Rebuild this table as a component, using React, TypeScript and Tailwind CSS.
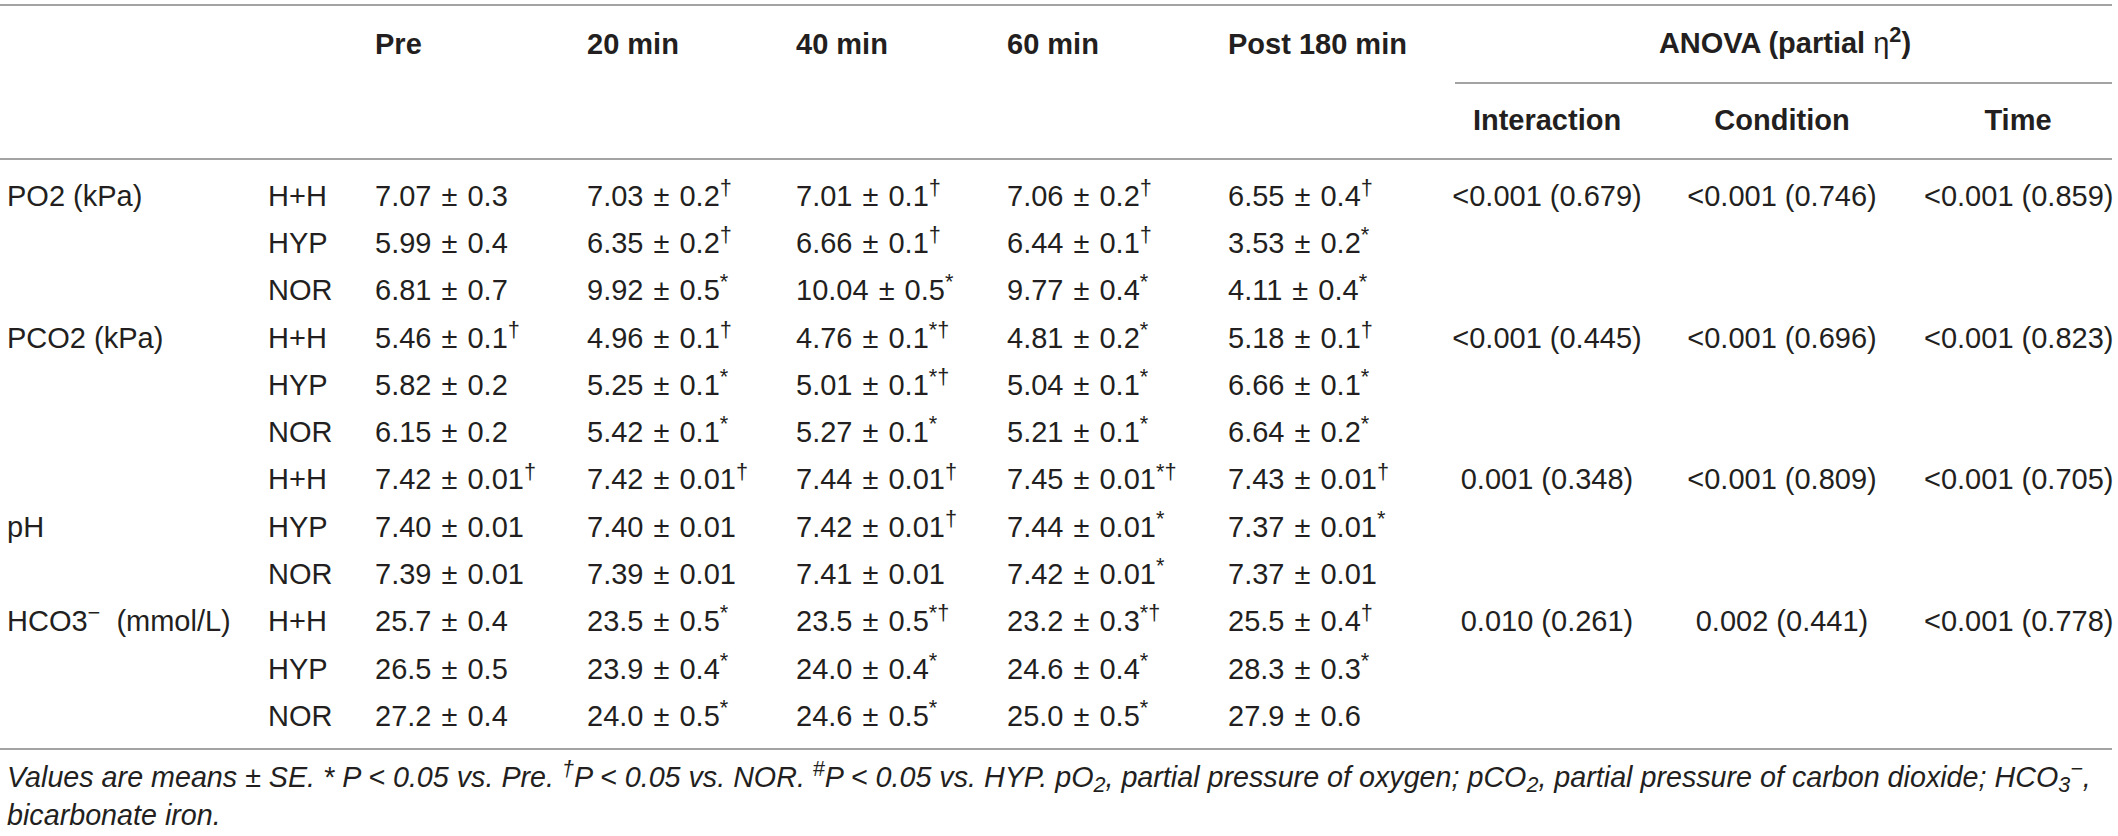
import React from 'react';

type Cell = [string, string];

interface Row {
  label?: React.ReactNode;
  group: string;
  values: Cell[];
  anova?: [string, string, string];
}

const GRID =
  'grid grid-cols-[268px_107px_212px_209px_211px_221px_212px_214px_270px_188px]';

const rows: Row[] = [
  {
    label: 'PO2 (kPa)',
    group: 'H+H',
    values: [['7.07 ± 0.3', ''], ['7.03 ± 0.2', '†'], ['7.01 ± 0.1', '†'], ['7.06 ± 0.2', '†'], ['6.55 ± 0.4', '†']],
    anova: ['<0.001 (0.679)', '<0.001 (0.746)', '<0.001 (0.859)']
  },
  {
    group: 'HYP',
    values: [['5.99 ± 0.4', ''], ['6.35 ± 0.2', '†'], ['6.66 ± 0.1', '†'], ['6.44 ± 0.1', '†'], ['3.53 ± 0.2', '*']]
  },
  {
    group: 'NOR',
    values: [['6.81 ± 0.7', ''], ['9.92 ± 0.5', '*'], ['10.04 ± 0.5', '*'], ['9.77 ± 0.4', '*'], ['4.11 ± 0.4', '*']]
  },
  {
    label: 'PCO2 (kPa)',
    group: 'H+H',
    values: [['5.46 ± 0.1', '†'], ['4.96 ± 0.1', '†'], ['4.76 ± 0.1', '*†'], ['4.81 ± 0.2', '*'], ['5.18 ± 0.1', '†']],
    anova: ['<0.001 (0.445)', '<0.001 (0.696)', '<0.001 (0.823)']
  },
  {
    group: 'HYP',
    values: [['5.82 ± 0.2', ''], ['5.25 ± 0.1', '*'], ['5.01 ± 0.1', '*†'], ['5.04 ± 0.1', '*'], ['6.66 ± 0.1', '*']]
  },
  {
    group: 'NOR',
    values: [['6.15 ± 0.2', ''], ['5.42 ± 0.1', '*'], ['5.27 ± 0.1', '*'], ['5.21 ± 0.1', '*'], ['6.64 ± 0.2', '*']]
  },
  {
    group: 'H+H',
    values: [['7.42 ± 0.01', '†'], ['7.42 ± 0.01', '†'], ['7.44 ± 0.01', '†'], ['7.45 ± 0.01', '*†'], ['7.43 ± 0.01', '†']],
    anova: ['0.001 (0.348)', '<0.001 (0.809)', '<0.001 (0.705)']
  },
  {
    label: 'pH',
    group: 'HYP',
    values: [['7.40 ± 0.01', ''], ['7.40 ± 0.01', ''], ['7.42 ± 0.01', '†'], ['7.44 ± 0.01', '*'], ['7.37 ± 0.01', '*']]
  },
  {
    group: 'NOR',
    values: [['7.39 ± 0.01', ''], ['7.39 ± 0.01', ''], ['7.41 ± 0.01', ''], ['7.42 ± 0.01', '*'], ['7.37 ± 0.01', '']]
  },
  {
    label: (
      <>
        HCO3<sup>−</sup>&nbsp; (mmol/L)
      </>
    ),
    group: 'H+H',
    values: [['25.7 ± 0.4', ''], ['23.5 ± 0.5', '*'], ['23.5 ± 0.5', '*†'], ['23.2 ± 0.3', '*†'], ['25.5 ± 0.4', '†']],
    anova: ['0.010 (0.261)', '0.002 (0.441)', '<0.001 (0.778)']
  },
  {
    group: 'HYP',
    values: [['26.5 ± 0.5', ''], ['23.9 ± 0.4', '*'], ['24.0 ± 0.4', '*'], ['24.6 ± 0.4', '*'], ['28.3 ± 0.3', '*']]
  },
  {
    group: 'NOR',
    values: [['27.2 ± 0.4', ''], ['24.0 ± 0.5', '*'], ['24.6 ± 0.5', '*'], ['25.0 ± 0.5', '*'], ['27.9 ± 0.6', '']]
  }
];

const Rule = () => <div className="h-[2px] bg-[#a3a3a3]" />;

export default function App() {
  return (
    <div className="min-h-screen bg-white pt-[4px] font-['Liberation_Sans',Arial,sans-serif] text-[29px] text-[#231f20]">
      <div className="w-[2112px]">
        <Rule />

        {/* Header */}
        <div className={`${GRID} h-[78px] font-bold`}>
          <div />
          <div />
          <div className="flex items-center">Pre</div>
          <div className="flex items-center">20 min</div>
          <div className="flex items-center">40 min</div>
          <div className="flex items-center">60 min</div>
          <div className="flex items-center">Post 180 min</div>
          <div className="col-span-3 ml-[15px] flex items-center justify-center border-b-2 border-[#a3a3a3] pl-[3px]">
            <span>
              ANOVA (partial <span className="font-normal">η</span>
              <sup>2</sup>)
            </span>
          </div>
        </div>
        <div className={`${GRID} h-[74px] font-bold`}>
          <div className="col-span-7" />
          <div className="flex items-center justify-center">Interaction</div>
          <div className="flex items-center justify-center pr-[14px]">Condition</div>
          <div className="flex items-center justify-center">Time</div>
        </div>
        <Rule />

        {/* Body */}
        <div className="pt-[12px] pb-[8px]">
          {rows.map((r, i) => (
            <div key={i} className={`${GRID} h-[47.3px] items-center whitespace-nowrap leading-[32px]`}>
              <div className="pl-[7px]">{r.label}</div>
              <div>{r.group}</div>
              {r.values.map(([v, mark], j) => (
                <div key={j} className="[word-spacing:2px]">
                  {v}
                  {mark && <sup>{mark}</sup>}
                </div>
              ))}
              <div className="text-center">{r.anova?.[0]}</div>
              <div className="pr-[14px] text-center">{r.anova?.[1]}</div>
              <div className="text-center">{r.anova?.[2]}</div>
            </div>
          ))}
        </div>
        <Rule />

        {/* Footnote */}
        <p className="pt-[8px] pl-[7px] text-[28.7px] leading-[38px] italic">
          Values are means ± SE. * P &lt; 0.05 vs. Pre. <sup>†</sup>P &lt; 0.05 vs. NOR. <sup>#</sup>P &lt; 0.05 vs.
          HYP. pO<sub>2</sub>, partial pressure of oxygen; pCO<sub>2</sub>, partial pressure of carbon dioxide;
          HCO<sub>3</sub>
          <sup>−</sup>, bicarbonate iron.
        </p>
      </div>
    </div>
  );
}
